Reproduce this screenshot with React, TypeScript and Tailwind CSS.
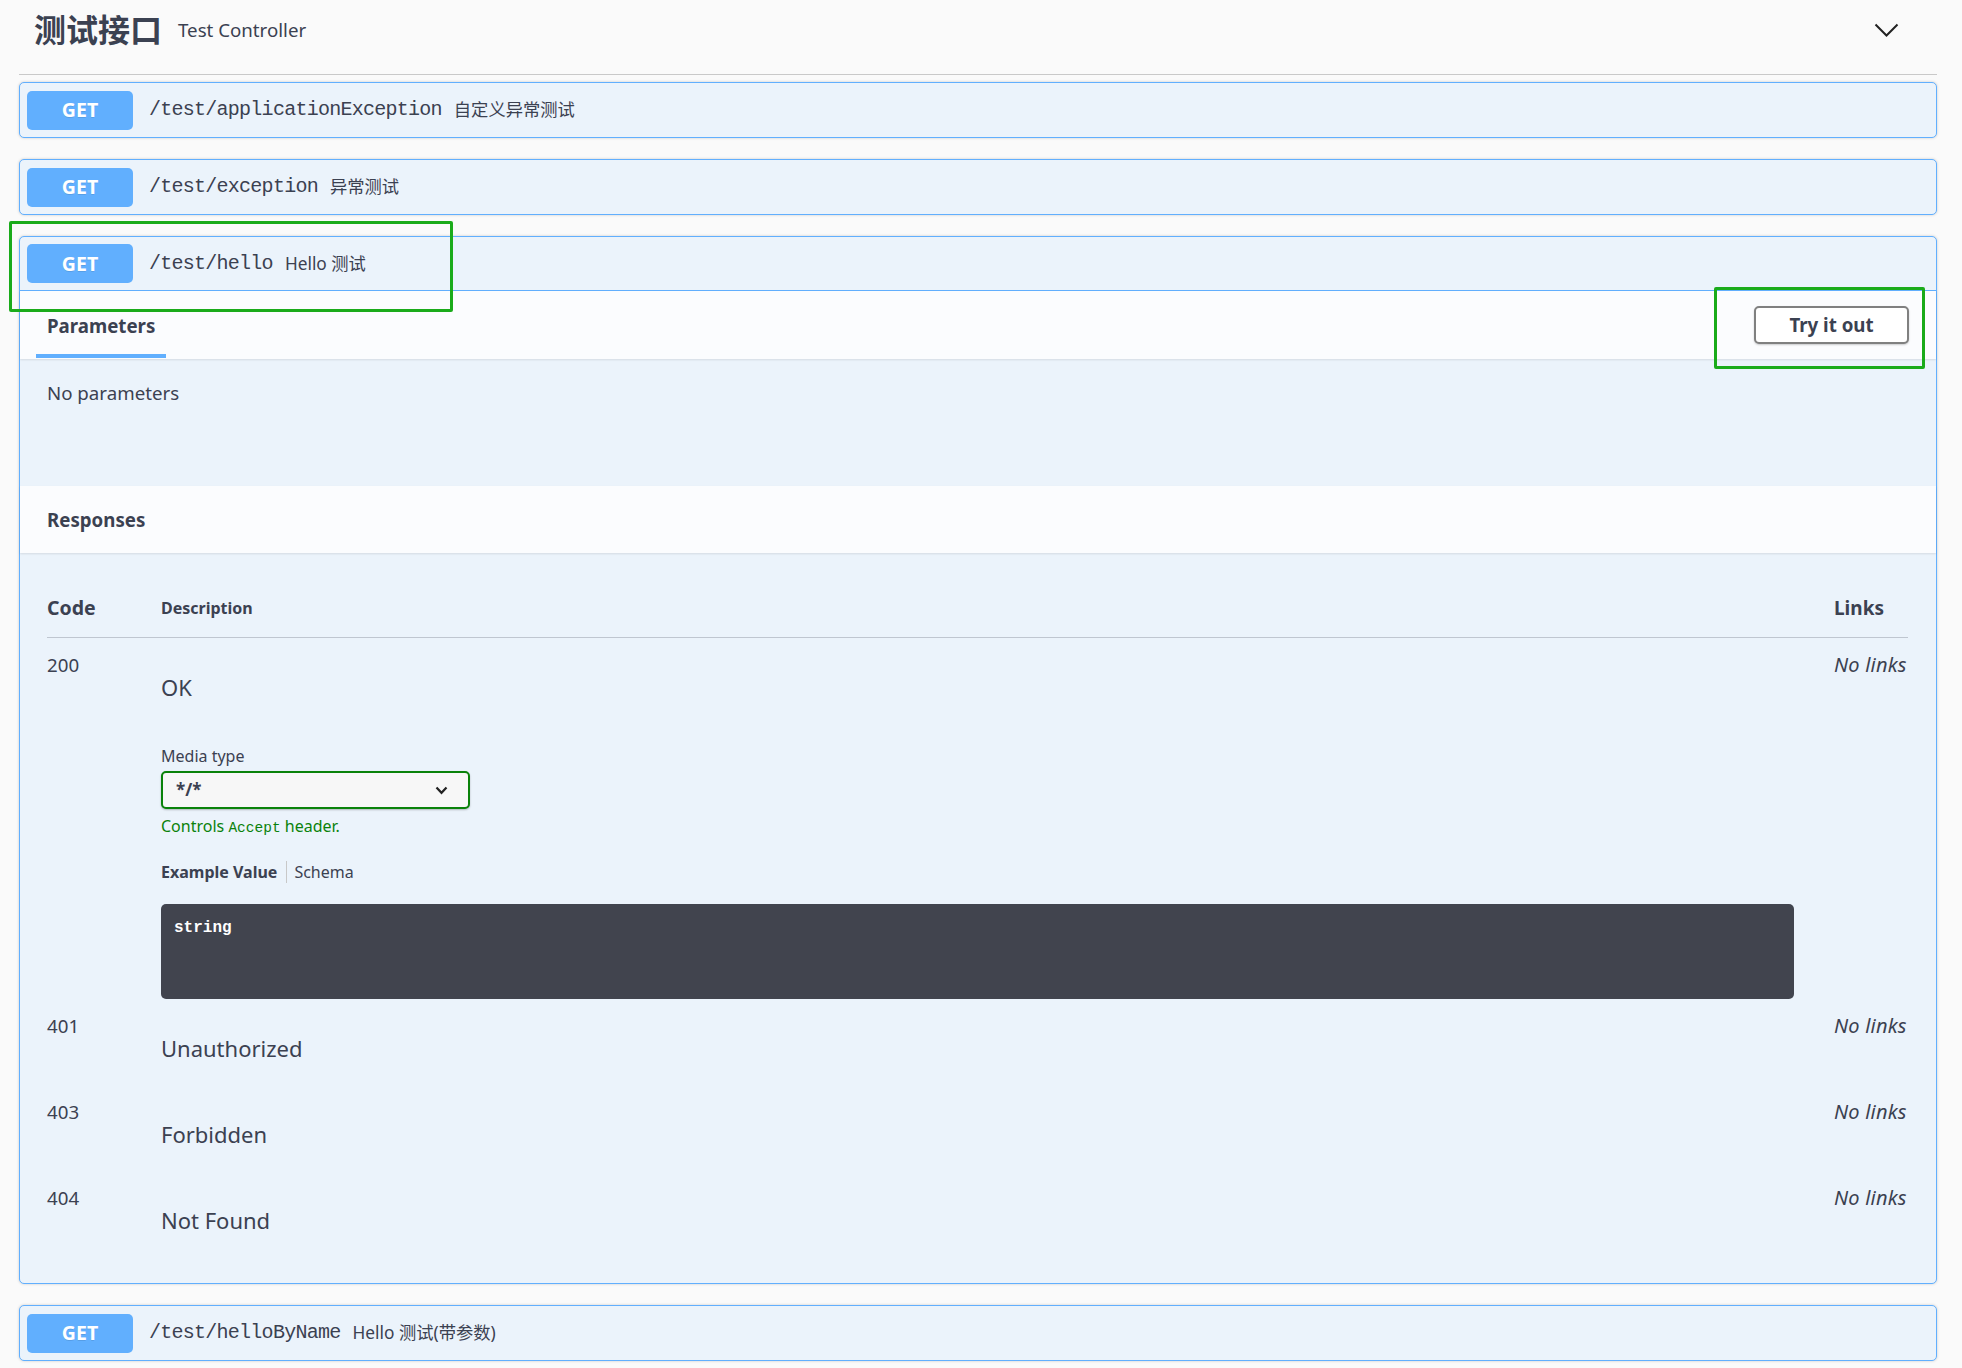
import React from "react";

const sans = "font-['Noto_Sans','Noto_Sans_CJK_SC',sans-serif]";
const mono = "font-['Liberation_Mono','Noto_Sans_CJK_SC',monospace]";

function GetBadge() {
  return (
    <span className="flex h-[39px] w-[106px] shrink-0 items-center justify-center rounded-[5px] bg-[#61affe] text-[19.5px] font-bold text-white [text-shadow:0_1px_0_rgba(0,0,0,0.1)]">
      GET
    </span>
  );
}

function OpSummary({ path, summary, open }: { path: string; summary: string; open?: boolean }) {
  return (
    <div className={`flex h-[54px] items-center px-[7px] ${open ? "border-b border-[#61affe]" : ""}`}>
      <GetBadge />
      <span className={`ml-[16px] text-[20px] tracking-[-0.74px] text-[#3b4151] ${mono}`}>{path}</span>
      <span className="ml-[12px] text-[17.3px] text-[#3b4151]">{summary}</span>
    </div>
  );
}

function OpBlock({ children }: { children: React.ReactNode }) {
  return (
    <div className="rounded-[5px] border border-[#61affe] bg-[#ebf3fb] shadow-[0_0_3px_rgba(0,0,0,0.19)]">
      {children}
    </div>
  );
}

function ResponseRow({ code, desc, children }: { code: string; desc: string; children?: React.ReactNode }) {
  return (
    <div className="grid grid-cols-[114px_1fr_74px] pt-[13px]">
      <div className="text-[18.7px] leading-[28px]">{code}</div>
      <div className="flex flex-col">
        <div className="mb-[22px] mt-[21px] text-[22px] leading-[30px]">{desc}</div>
        {children}
      </div>
      <div className="whitespace-nowrap text-[20px] italic leading-[28px] tracking-[0.2px]">No links</div>
    </div>
  );
}

export default function App() {
  return (
    <div className={`relative min-h-screen bg-[#fafafa] pl-[19px] pr-[25px] text-[#3b4151] ${sans}`}>
      {/* Tag header */}
      <div className="flex h-[75px] items-center border-b border-[#c9c9c9] pb-[14px] pl-[15px] pr-[38px]">
        <h3 className="text-[32px] font-bold leading-[40px]">测试接口</h3>
        <span className="ml-[16px] text-[18.7px] leading-[26px]">Test Controller</span>
        <svg className="ml-auto" width="25" height="14" viewBox="0 0 25 14">
          <path d="M1.5 1.5 L12.5 12.5 L23.5 1.5" fill="none" stroke="#222" strokeWidth="2" />
        </svg>
      </div>

      <div className="mt-[7px] flex flex-col gap-[21px]">
        <OpBlock>
          <OpSummary path="/test/applicationException" summary="自定义异常测试" />
        </OpBlock>

        <OpBlock>
          <OpSummary path="/test/exception" summary="异常测试" />
        </OpBlock>

        <OpBlock>
          <OpSummary path="/test/hello" summary="Hello 测试" open />

          {/* Parameters header */}
          <div className="flex h-[68px] items-center justify-between bg-[#fbfcfe] pl-[16px] pr-[27px] shadow-[0_1px_2px_rgba(0,0,0,0.1)]">
            <div className="flex h-[67px] items-center self-start border-b-4 border-[#61affe] px-[11px] pt-[6px]">
              <h4 className="text-[18.7px] font-bold leading-[28px]">Parameters</h4>
            </div>
            <button className="h-[38px] w-[155px] rounded-[5px] border-2 border-[#808080] bg-white text-[18.7px] font-bold text-[#3b4151] shadow-[0_1px_2px_rgba(0,0,0,0.2)]">
              Try it out
            </button>
          </div>

          <div className="h-[127px] px-[27px] pt-[20px]">
            <p className="text-[18.7px] leading-[28px]">No parameters</p>
          </div>

          {/* Responses header */}
          <div className="flex h-[67px] items-center bg-[#fbfcfe] px-[27px] shadow-[0_1px_2px_rgba(0,0,0,0.1)]">
            <h4 className="text-[18.7px] font-bold leading-[28px]">Responses</h4>
          </div>

          <div className="pb-[26px] pl-[27px] pr-[28px] pt-[41px]">
            <div className="grid grid-cols-[114px_1fr_74px] items-center border-b border-[rgba(59,65,81,0.25)] pb-[15px]">
              <div className="text-[19.5px] font-bold leading-[28px]">Code</div>
              <div className="text-[16px] font-bold leading-[28px]">Description</div>
              <div className="text-[19px] font-bold leading-[28px]">Links</div>
            </div>

            <ResponseRow code="200" desc="OK">
              <div className="mt-[21px] text-[16px] leading-[22px]">Media type</div>
              <div className="mt-[4px] flex h-[38px] w-[309px] items-center justify-between rounded-[5px] border-2 border-[#0a820a] bg-[#f7f7f7] pl-[13px] pr-[20px] shadow-[0_1px_2px_rgba(0,0,0,0.25)]">
                <span className="text-[17px] font-bold">*/*</span>
                <svg width="13" height="9" viewBox="0 0 13 9">
                  <path d="M1.5 1.5 L6.5 6.8 L11.5 1.5" fill="none" stroke="#222" strokeWidth="2.2" />
                </svg>
              </div>
              <div className="mt-[6px] text-[16px] leading-[22px] text-[#0a820a]">
                Controls <code className={`text-[14.5px] ${mono}`}>Accept</code> header.
              </div>
              <div className="mt-[22px] flex items-center text-[16px] leading-[22px]">
                <span className="border-r border-[#c8c8c8] pr-[9px] font-bold">Example Value</span>
                <span className="pl-[7px]">Schema</span>
              </div>
              <div className="mr-[40px] mt-[21px] h-[95px] rounded-[5px] bg-[#41444e] px-[13px] pt-[13px]">
                <pre className={`text-[16px] font-bold leading-[22px] text-white ${mono}`}>string</pre>
              </div>
            </ResponseRow>

            <ResponseRow code="401" desc="Unauthorized" />
            <ResponseRow code="403" desc="Forbidden" />
            <ResponseRow code="404" desc="Not Found" />
          </div>
        </OpBlock>

        <OpBlock>
          <OpSummary path="/test/helloByName" summary="Hello 测试(带参数)" />
        </OpBlock>
      </div>

      {/* annotation boxes */}
      <div className="pointer-events-none absolute left-[9px] top-[221px] h-[91px] w-[444px] rounded-[2px] border-[3px] border-[#1aab1a]" />
      <div className="pointer-events-none absolute left-[1714px] top-[287px] h-[82px] w-[211px] rounded-[2px] border-[3px] border-[#1aab1a]" />
    </div>
  );
}
